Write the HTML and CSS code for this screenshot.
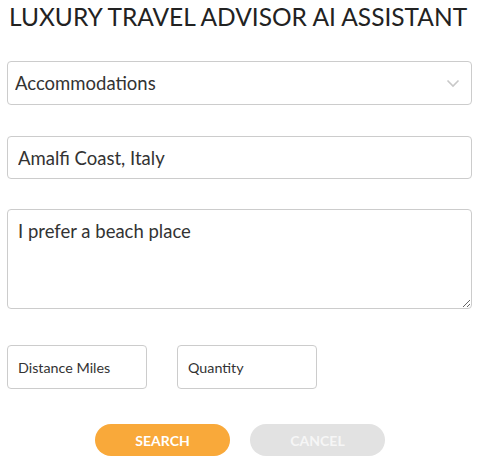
FILE: index.html
```html
<!DOCTYPE html>
<html>
<head>
<meta charset="utf-8">
<link rel="stylesheet" href="styles.css">
</head>
<body>
<div class="page">
  <h1 class="title">LUXURY TRAVEL ADVISOR AI ASSISTANT</h1>
  <div class="select-wrap">
    <select class="field select">
      <option>Accommodations</option>
    </select>
    <svg class="chev" width="14" height="9" viewBox="0 0 14 9"><path d="M1.5 1.5 L7 7 L12.5 1.5" fill="none" stroke="#c8c8c8" stroke-width="1.6"/></svg>
  </div>
  <input class="field input" type="text" value="Amalfi Coast, Italy">
  <textarea class="field area">I prefer a beach place</textarea>
  <div class="row">
    <input class="field small" type="text" value="Distance Miles">
    <input class="field small" type="text" value="Quantity">
  </div>
  <div class="buttons">
    <button class="btn search">SEARCH</button>
    <button class="btn cancel">CANCEL</button>
  </div>
</div>
</body>
</html>
```
FILE: styles.css
```css
html, body { margin: 0; padding: 0; background: #fff; }
body { font-family: Lato, "Noto Sans", sans-serif; color: #333; }
.page { padding: 0 6px 0 7px; width: 465px; display: flex; flex-direction: column; }
.title { margin: 3px 0 0 2px; font-size: 24.5px; font-weight: 400; color: #222; letter-spacing: 0; line-height: 28px; white-space: nowrap; }
.field { box-sizing: border-box; border: 1px solid #ccc; border-radius: 4px; font-family: Lato, "Noto Sans", sans-serif; color: #333; background: #fff; outline: none; margin: 0; }
.select-wrap { position: relative; margin-top: 30px; }
.select { width: 465px; height: 44px; appearance: none; -webkit-appearance: none; font-size: 18.5px; padding: 0 0 0 7px; }
.chev { position: absolute; right: 12px; top: 18px; }
.input { margin-top: 31px; width: 465px; height: 43px; font-size: 18.5px; padding: 0 10px; }
.area { margin-top: 30px; width: 465px; height: 100px; font-size: 18.5px; padding: 10px 10px; resize: vertical; display: block; line-height: 23px; }
.row { display: flex; gap: 30px; margin-top: 36px; }
.small { width: 140px; height: 44px; font-size: 14.3px; padding: 0 10px; }
.buttons { display: flex; gap: 20px; margin-top: 35px; padding-left: 88px; }
.btn { width: 135px; height: 32px; border: none; border-radius: 16px; font-family: Lato, "Noto Sans", sans-serif; font-size: 14px; font-weight: 700; color: #fff; padding: 0; }
.search { background: #f9a93a; }
.cancel { background: #e2e2e2; color: #f6f6f6; }
```
